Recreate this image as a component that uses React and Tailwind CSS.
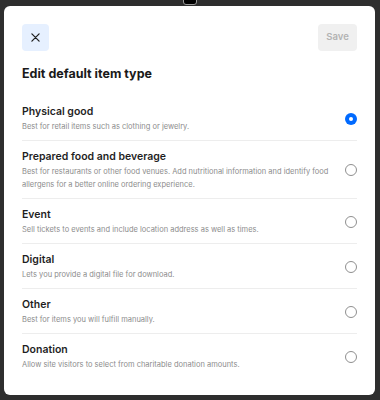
import React, { useState } from "react";

const itemTypes = [
  {
    id: "physical",
    title: "Physical good",
    desc: "Best for retail items such as clothing or jewelry.",
  },
  {
    id: "food",
    title: "Prepared food and beverage",
    desc: "Best for restaurants or other food venues. Add nutritional information and identify food allergens for a better online ordering experience.",
  },
  {
    id: "event",
    title: "Event",
    desc: "Sell tickets to events and include location address as well as times.",
  },
  {
    id: "digital",
    title: "Digital",
    desc: "Lets you provide a digital file for download.",
  },
  {
    id: "other",
    title: "Other",
    desc: "Best for items you will fulfill manually.",
  },
  {
    id: "donation",
    title: "Donation",
    desc: "Allow site visitors to select from charitable donation amounts.",
  },
];

function Radio({ checked }) {
  if (checked) {
    return (
      <span className="flex h-[12px] w-[12px] shrink-0 items-center justify-center rounded-full bg-[#006aff]">
        <span className="h-[4px] w-[4px] rounded-full bg-white" />
      </span>
    );
  }
  return (
    <span className="h-[12px] w-[12px] shrink-0 rounded-full border border-[#8f8f8f] bg-white" />
  );
}

export default function App() {
  let [selected, setSelected] = useState("physical");

  return (
    <div
      className="relative h-[400px] w-[380px] overflow-hidden bg-[#2e2e2e] px-[4px] pt-[6px]"
      style={{ fontFamily: "Inter, 'Noto Sans', sans-serif" }}
    >
      {/* bit of the page peeking from behind the dialog */}
      <div className="absolute left-[183px] top-[-6px] h-[11px] w-[14px] rounded-[3px] border border-[#9a9a9a] bg-black" />

      <div className="relative h-[389px] w-[371px] rounded-[6px] bg-white p-[18px]">
        <div className="flex items-center justify-between">
          <button className="flex h-[27px] w-[27px] items-center justify-center rounded-[4px] bg-[#e6f0ff]">
            <svg width="9" height="9" viewBox="0 0 10 10" fill="none">
              <path
                d="M1 1L9 9M9 1L1 9"
                stroke="#1f1f1f"
                strokeWidth="1.4"
                strokeLinecap="round"
              />
            </svg>
          </button>
          <button className="flex h-[27px] w-[39px] items-center justify-center rounded-[4px] bg-[#f0f0f0] text-[9.5px] font-semibold text-[#b3b3b3]">
            Save
          </button>
        </div>

        <h1 className="mb-[11px] mt-[13px] text-[12.5px] font-bold leading-[20px] text-[#1a1a1a]">
          Edit default item type
        </h1>

        <div>
          {itemTypes.map((item, i) => (
            <div
              key={item.id}
              onClick={() => setSelected(item.id)}
              className={
                "flex cursor-pointer items-center justify-between gap-[10px] pb-[7px] " +
                (i > 0 ? "border-t border-[#ededed] pt-[8px]" : "pt-[9px]")
              }
            >
              <div className="flex-1">
                <div className="text-[10.5px] font-semibold leading-[16px] text-[#1f1f1f]">
                  {item.title}
                </div>
                <div className="text-[7.5px] leading-[13px] text-[#8c8c8c]">
                  {item.desc}
                </div>
              </div>
              <Radio checked={selected === item.id} />
            </div>
          ))}
        </div>
      </div>
    </div>
  );
}
